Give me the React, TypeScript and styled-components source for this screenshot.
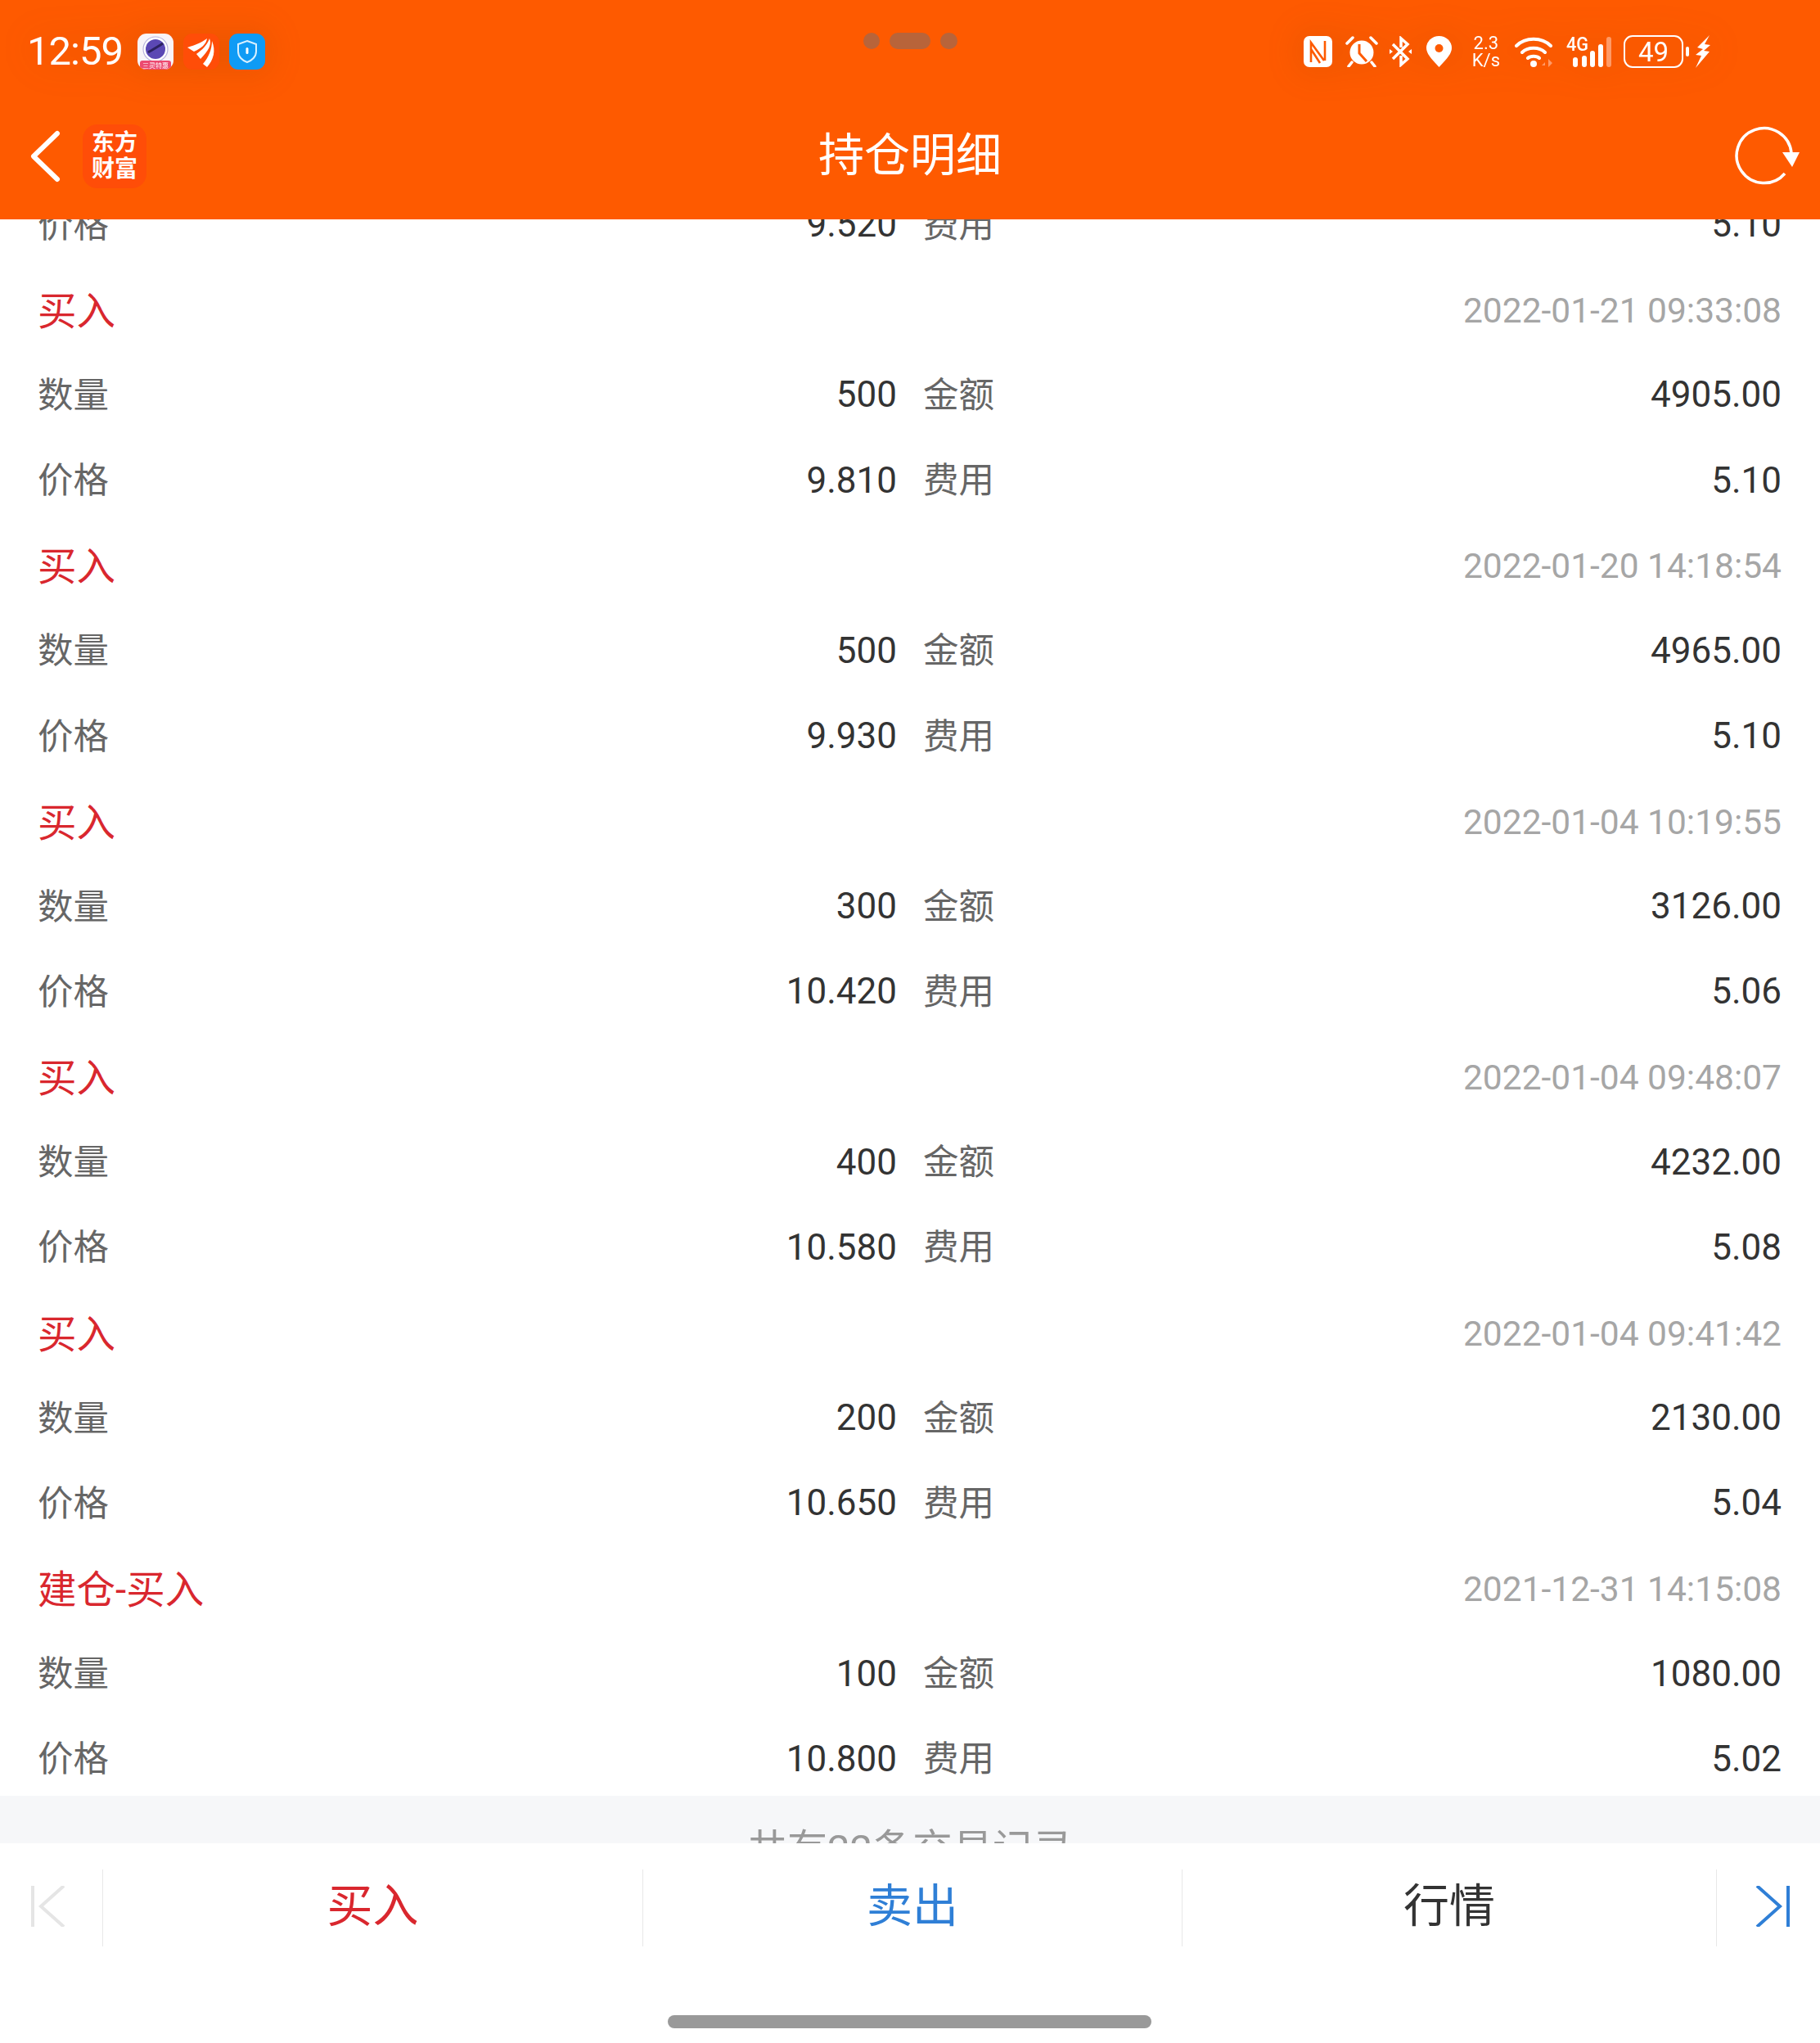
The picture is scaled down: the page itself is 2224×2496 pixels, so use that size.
import React from 'react'
import styled, { createGlobalStyle } from 'styled-components'

const GlobalStyle = createGlobalStyle`
    html, body { margin: 0; padding: 0; background: #fff; }
    body { font-family: "Roboto", "Noto Sans CJK SC", sans-serif; }
`

const Page = styled.div`
    width: 2224px;
    height: 2496px;
    display: flex;
    flex-direction: column;
    overflow: hidden;
    position: relative;
    background: #fff;
`
const Header = styled.header`
    height: 268px;
    flex: none;
    background: #fe5a00;
    display: flex;
    flex-direction: column;
    position: relative;
    z-index: 2;
`
const StatusBar = styled.div`
    height: 124px;
    display: flex;
    align-items: center;
    justify-content: space-between;
    padding: 2px 133px 0 33px;
    box-sizing: border-box;
`
const StatusLeft = styled.div`
    display: flex;
    align-items: center;
    gap: 12px;
    filter: drop-shadow(0 0 22px rgba(120, 60, 0, 0.22));
`
const Clock = styled.span`
    width: 123px;
    flex: none;
    color: #fff;
    font-size: 49px;
    line-height: 56px;
    letter-spacing: -1px;
`
const AppIcon = styled.div<{ $bg: string }>`
    width: 44px;
    height: 44px;
    border-radius: 11px;
    background: ${(p) => p.$bg};
    display: flex;
    align-items: center;
    justify-content: center;
    overflow: hidden;
`
const StatusRight = styled.div`
    display: flex;
    align-items: center;
    filter: drop-shadow(0 0 22px rgba(120, 60, 0, 0.22));
`
const StatusSlot = styled.div<{ $ml: number }>`
    margin-left: ${(p) => p.$ml}px;
    display: flex;
    align-items: center;
`
const Speed = styled.div`
    color: #fff;
    font-size: 22px;
    line-height: 21px;
    text-align: center;
`
const Battery = styled.div`
    width: 73px;
    height: 40px;
    box-sizing: border-box;
    border: 2.5px solid #fff;
    border-radius: 11px;
    color: #fff;
    font-size: 33px;
    display: flex;
    align-items: center;
    justify-content: center;
`
const Notch = styled.div`
    position: absolute;
    top: 40px;
    left: 1055px;
    display: flex;
    gap: 12px;
`
const NotchDot = styled.div<{ $w: number }>`
    width: ${(p) => p.$w}px;
    height: 20px;
    border-radius: 10px;
    background: #b8643a;
`
const NavBar = styled.div`
    height: 144px;
    display: flex;
    align-items: flex-start;
    justify-content: space-between;
    padding: 0 24px 0 36px;
`
const NavLeft = styled.div`
    display: flex;
    align-items: center;
    gap: 27px;
    padding-top: 28px;
`
const Logo = styled.div`
    width: 78px;
    height: 78px;
    border-radius: 18px;
    background: #ff4d08;
    color: #fff;
    font-size: 28px;
    font-weight: 700;
    line-height: 32px;
    text-align: center;
    display: flex;
    align-items: center;
    justify-content: center;
`
const Title = styled.h1`
    position: absolute;
    left: 0;
    right: 0;
    top: 154px;
    margin: 0;
    color: #fff;
    font-size: 56px;
    line-height: 72px;
    font-weight: 400;
    text-align: center;
`
const RefreshWrap = styled.div`
    padding-top: 30px;
`
const List = styled.main`
    height: 1926px;
    flex: none;
    overflow: hidden;
    position: relative;
    background: #fff;
`
const Scroller = styled.div`
    margin-top: -47px;
    padding: 0 47px 0 46px;
`
const Row = styled.div`
    height: 104.17px;
    display: grid;
    grid-template-columns: 1050px 32px 1fr;
    align-items: center;
    color: #333;
`
const HeadRow = styled.div`
    height: 104.17px;
    display: flex;
    align-items: center;
    justify-content: space-between;
`
const Action = styled.span`
    color: #d9272e;
    font-size: 47.5px;
    padding-bottom: 2px;
`
const Stamp = styled.span`
    color: #a6a6a6;
    font-size: 42.5px;
    padding-top: 4px;
`
const Label = styled.span`
    color: #666;
    font-size: 43.5px;
    padding-bottom: 4px;
`
const Value = styled.span`
    text-align: right;
    color: #333;
    font-size: 44px;
    padding-top: 2px;
`
const MidCell = styled.div`
    display: flex;
    justify-content: space-between;
    align-items: center;
`
const Footer = styled.div`
    height: 58px;
    flex: none;
    background: #f6f7f9;
    overflow: hidden;
    text-align: center;
    color: #999;
    font-size: 49px;
    padding-top: 38px;
    line-height: 56px;
    box-sizing: border-box;
`
const Toolbar = styled.nav`
    height: 244px;
    flex: none;
    background: #fff;
    position: relative;
`
const ToolRow = styled.div`
    height: 94px;
    margin-top: 32px;
    display: grid;
    grid-template-columns: 126px 660px 659px 653px 126px;
`
const ToolCell = styled.div<{ $color: string; $shift?: number }>`
    display: flex;
    align-items: center;
    justify-content: center;
    box-sizing: border-box;
    color: ${(p) => p.$color};
    font-size: 56px;
    line-height: 60px;
    padding-bottom: 4px;
    padding-left: ${(p) => Math.max(p.$shift ?? 0, 0)}px;
    padding-right: ${(p) => Math.max(-(p.$shift ?? 0), 0)}px;
    border-right: 1px solid #e8e8e8;
    &:last-child { border-right: none; }
`
const HomeBar = styled.div`
    position: absolute;
    left: 816px;
    top: 210px;
    width: 591px;
    height: 16px;
    border-radius: 8px;
    background: #999;
`

const trades = [
    { action: '买入', time: '2022-01-21 09:33:08', qty: '500', amount: '4905.00', price: '9.810', fee: '5.10' },
    { action: '买入', time: '2022-01-20 14:18:54', qty: '500', amount: '4965.00', price: '9.930', fee: '5.10' },
    { action: '买入', time: '2022-01-04 10:19:55', qty: '300', amount: '3126.00', price: '10.420', fee: '5.06' },
    { action: '买入', time: '2022-01-04 09:48:07', qty: '400', amount: '4232.00', price: '10.580', fee: '5.08' },
    { action: '买入', time: '2022-01-04 09:41:42', qty: '200', amount: '2130.00', price: '10.650', fee: '5.04' },
    { action: '建仓-买入', time: '2021-12-31 14:15:08', qty: '100', amount: '1080.00', price: '10.800', fee: '5.02' },
]

const PairRow = ({ l1, v1, l2, v2 }: { l1: string; v1: string; l2: string; v2: string }) => (
    <Row>
        <MidCell>
            <Label>{l1}</Label>
            <Value>{v1}</Value>
        </MidCell>
        <span />
        <MidCell>
            <Label>{l2}</Label>
            <Value>{v2}</Value>
        </MidCell>
    </Row>
)

const App: React.FC = () => {
    return (
        <Page>
            <GlobalStyle />
            <Header>
                <StatusBar>
                    <StatusLeft>
                        <Clock>12:59</Clock>
                        <AppIcon $bg="#f8f4f8">
                            <svg width="44" height="44" viewBox="0 0 44 44">
                                <circle cx="22" cy="19" r="15" fill="#fff" stroke="#b9b3dc" strokeWidth="1.2" />
                                <circle cx="22" cy="19" r="12" fill="#5b48b4" />
                                <path d="M13 23 C18 20 25 16 31 12" stroke="#2c2260" strokeWidth="3" fill="none" />
                                <rect x="3" y="33" width="38" height="11" rx="3" fill="#ec4a70" />
                                <text x="22" y="42" fill="#fff" fontSize="8" textAnchor="middle" fontFamily="Noto Sans CJK SC">三灵特惠</text>
                            </svg>
                        </AppIcon>
                        <AppIcon $bg="#ff4d08">
                            <svg width="44" height="44" viewBox="0 0 44 44">
                                <path d="M5 17 C15 14 22 11 29 6 C28 13 22 18 13 22 Z" fill="#fff" />
                                <path d="M16 25 C23 20 29 14 32 6 C35 13 31 21 21 31 Z" fill="#fff" />
                                <path d="M24 37 C31 29 35 19 35 9 C40 21 37 32 29 41 Z" fill="#fff" />
                            </svg>
                        </AppIcon>
                        <AppIcon $bg="#0f9bf5">
                            <svg width="44" height="44" viewBox="0 0 44 44">
                                <path d="M22 9 L33 13 V22 C33 28 28 33 22 35 C16 33 11 28 11 22 V13 Z" fill="none" stroke="#d8f0ff" strokeWidth="2" />
                                <rect x="20.5" y="17" width="3" height="8" rx="1.5" fill="#fff" />
                            </svg>
                        </AppIcon>
                    </StatusLeft>
                    <StatusRight>
                        <StatusSlot $ml={0}>
                            <svg width="35" height="38" viewBox="0 0 35 38">
                                <rect width="35" height="38" rx="7" fill="#fff" />
                                <path d="M9 32 V8 L25 30 M26 6 V30 M9 16 L20 33" fill="none" stroke="#fe5a00" strokeWidth="2.6" />
                            </svg>
                        </StatusSlot>
                        <StatusSlot $ml={16}>
                            <svg width="40" height="38" viewBox="0 0 40 38">
                                <circle cx="20" cy="20" r="14.500" fill="#fff" />
                                <path d="M17 10 V21 L26 31" fill="none" stroke="#fe5a00" strokeWidth="3" />
                                <path d="M2 9 L9 2 M38 9 L31 2 M8 32 L4 37 M32 32 L36 37" stroke="#fff" strokeWidth="3.500" strokeLinecap="round" />
                            </svg>
                        </StatusSlot>
                        <StatusSlot $ml={14}>
                            <svg width="27" height="38" viewBox="0 0 27 38">
                                <path d="M4 10 L22 28 L14 35 V24 M4 28 L22 10 L14 3 V14" fill="none" stroke="#fff" strokeWidth="3.500" />
                                <path d="M0 16 L4 19 L0 22 Z M27 16 L23 19 L27 22 Z" fill="#fff" />
                            </svg>
                        </StatusSlot>
                        <StatusSlot $ml={18}>
                            <svg width="31" height="38" viewBox="0 0 31 38">
                                <path d="M15.500 38 C5 27 0 21 0 14.500 A15.500 14.500 0 0 1 31 14.500 C31 21 26 27 15.500 38 Z" fill="#fff" />
                                <circle cx="15.500" cy="15" r="5" fill="#fe5a00" />
                            </svg>
                        </StatusSlot>
                        <StatusSlot $ml={25}>
                            <Speed>2.3<br />K/s</Speed>
                        </StatusSlot>
                        <StatusSlot $ml={18}>
                            <svg width="49" height="38" viewBox="0 0 49 38">
                                <path d="M2 12 C13 1 33 1 44 12 M9 20 C16 13 30 13 37 20 M16 27 C19 24 27 24 30 27" fill="none" stroke="#fff" strokeWidth="4" strokeLinecap="round" />
                                <circle cx="23" cy="34" r="4" fill="#fff" />
                                <path d="M37 32 L33 36 H37 Z M41 28 V38 L46 33 Z" fill="#ff9a66" />
                            </svg>
                        </StatusSlot>
                        <StatusSlot $ml={14}>
                            <svg width="55" height="38" viewBox="0 0 55 38">
                                <text x="0" y="18" fill="#fff" fontSize="23" fontWeight="500" fontFamily="Roboto" textLength="27" lengthAdjust="spacingAndGlyphs">4G</text>
                                <rect x="8" y="26" width="6" height="12" rx="3" fill="#fff" />
                                <rect x="19" y="24" width="6" height="14" rx="3" fill="#fff" />
                                <rect x="29" y="18" width="6" height="20" rx="3" fill="#fff" />
                                <rect x="39" y="10" width="6" height="28" rx="3" fill="#fff" />
                                <rect x="49" y="1" width="6" height="37" rx="3" fill="#ff9a66" />
                            </svg>
                        </StatusSlot>
                        <StatusSlot $ml={15}>
                            <Battery>49</Battery>
                        </StatusSlot>
                        <StatusSlot $ml={3}>
                            <svg width="5" height="12" viewBox="0 0 5 12">
                                <rect width="4" height="12" rx="2" fill="#fff" />
                            </svg>
                        </StatusSlot>
                        <StatusSlot $ml={6}>
                            <svg width="20" height="40" viewBox="0 0 20 40">
                                <path d="M18 0 L3 15 L10 17 L1 24 L8 25 L1 40 L18 20 L11 19 L19 12 L12 11 Z" fill="#fff" />
                            </svg>
                        </StatusSlot>
                    </StatusRight>
                </StatusBar>
                <Notch>
                    <NotchDot $w={20} />
                    <NotchDot $w={50} />
                    <NotchDot $w={21} />
                </Notch>
                <NavBar>
                    <NavLeft>
                        <svg width="38" height="64" viewBox="0 0 38 64">
                            <path d="M34 4 L5 32 L34 60" fill="none" stroke="#fff" strokeWidth="6" strokeLinecap="round" strokeLinejoin="round" />
                        </svg>
                        <Logo>东方<br />财富</Logo>
                    </NavLeft>
                    <Title>持仓明细</Title>
                    <RefreshWrap>
                        <svg width="80" height="72" viewBox="0 0 80 72">
                            <path d="M69 33 A33.500 33.500 0 1 0 61 58" fill="none" stroke="#fff" strokeWidth="3.500" />
                            <path d="M58 32 H79 L70 50 Z" fill="#fff" />
                        </svg>
                    </RefreshWrap>
                </NavBar>
            </Header>
            <List>
                <Scroller>
                    <PairRow l1="价格" v1="9.520" l2="费用" v2="5.10" />
                    {trades.map((t) => (
                        <React.Fragment key={t.time}>
                            <HeadRow>
                                <Action>{t.action}</Action>
                                <Stamp>{t.time}</Stamp>
                            </HeadRow>
                            <PairRow l1="数量" v1={t.qty} l2="金额" v2={t.amount} />
                            <PairRow l1="价格" v1={t.price} l2="费用" v2={t.fee} />
                        </React.Fragment>
                    ))}
                </Scroller>
            </List>
            <Footer>共有22条交易记录</Footer>
            <Toolbar>
                <ToolRow>
                    <ToolCell $color="#e5e5e5" $shift={-8}>
                        <svg width="44" height="50" viewBox="0 0 44 50">
                            <path d="M3 0 V50 M41 0 L13 25 L41 50" fill="none" stroke="currentColor" strokeWidth="4" />
                        </svg>
                    </ToolCell>
                    <ToolCell $color="#d9272e">买入</ToolCell>
                    <ToolCell $color="#2f7fd6">卖出</ToolCell>
                    <ToolCell $color="#333">行情</ToolCell>
                    <ToolCell $color="#2f7fd6" $shift={10}>
                        <svg width="44" height="50" viewBox="0 0 44 50">
                            <path d="M41 0 V50 M3 0 L31 25 L3 50" fill="none" stroke="currentColor" strokeWidth="4" />
                        </svg>
                    </ToolCell>
                </ToolRow>
                <HomeBar />
            </Toolbar>
        </Page>
    )
}

export default App
